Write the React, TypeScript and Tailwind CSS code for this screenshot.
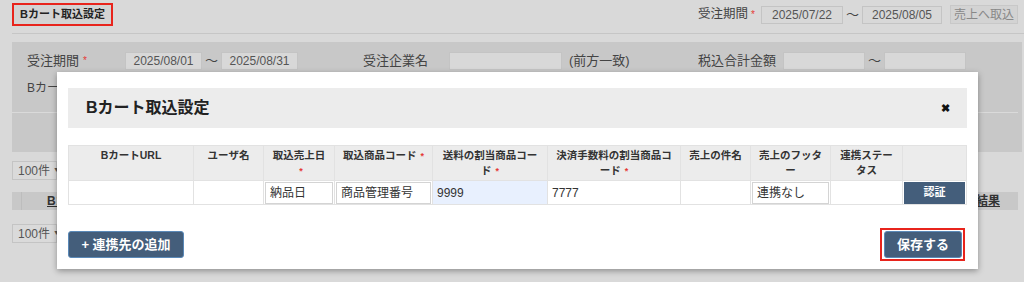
const font = { fontFamily: '"Liberation Sans", "Noto Sans CJK JP", sans-serif' };

function Req() {
  return <span className="ml-1 text-[10px] text-[#e53935]">*</span>;
}

function BgInput({ w, value }: { w: string; value?: string }) {
  return (
    <div className={`${w} flex h-[18px] items-center justify-center border border-[#c4c4c4] bg-[#d8d8d8] text-[12px] text-[#555]`}>
      {value}
    </div>
  );
}

function PerPage({ className = '' }: { className?: string }) {
  return (
    <div
      className={`flex h-[19px] w-[45px] items-center whitespace-nowrap border border-[#c4c4c4] bg-[#dadada] pl-[5px] text-[12px] text-[#555] ${className}`}
    >
      100件<span className="ml-[3px] text-[7px]">▼</span>
    </div>
  );
}

function Background() {
  return (
    <div className="h-[282px] w-[1024px] overflow-hidden bg-[#d9d9d9] pl-[12px] text-[#333]">
      {/* top bar */}
      <div className="flex h-[34px] items-start justify-between border-b border-[#c6c6c6] pr-[6px] pt-[3px]">
        <div className="border-2 border-[#e8241c]">
          <div className="flex h-[19px] w-[97px] items-center justify-center bg-[#d3d3d3] text-[11px] font-bold text-[#222]">
            Bカート取込設定
          </div>
        </div>
        <div className="flex items-center pt-[2px]">
          <span className="text-[12.5px] text-[#444]">受注期間</span>
          <span className="ml-[3px] text-[10px] text-[#e53935]">*</span>
          <div className="ml-[6px]">
            <BgInput w="w-[82px]" value="2025/07/22" />
          </div>
          <span className="mx-[3px] text-[13px] text-[#444]">〜</span>
          <BgInput w="w-[80px]" value="2025/08/05" />
          <div className="ml-[8px] flex h-[19px] w-[68px] items-center justify-center border border-[#c8c8c8] bg-[#d3d3d3] text-[12px] text-[#888]">
            売上へ取込
          </div>
        </div>
      </div>

      {/* search panel */}
      <div className="mt-[8px] mr-[2px] h-[110px] bg-[#c8c8c8]">
        <div className="flex items-center pt-[9px] pl-[15px] text-[13px] text-[#444]">
          <div className="flex w-[98px] items-center">
            受注期間
            <Req />
          </div>
          <BgInput w="w-[77px]" value="2025/08/01" />
          <span className="mx-[3px] text-[13px]">〜</span>
          <BgInput w="w-[77px]" value="2025/08/31" />
          <span className="ml-[65px] w-[86px]">受注企業名</span>
          <BgInput w="w-[113px]" />
          <span className="ml-[7px] w-[129px]">(前方一致)</span>
          <span className="w-[85px]">税込合計金額</span>
          <BgInput w="w-[82px]" />
          <span className="mx-[3px] text-[13px]">〜</span>
          <BgInput w="w-[82px]" />
        </div>
        <div className="mt-[8px] pl-[15px] text-[12px] text-[#444]">Bカート連携</div>
        <div className="mt-[15px] mr-[4px] border-b border-[#dadada]" />
      </div>

      {/* list area */}
      <PerPage className="mt-[9px]" />
      <div className="mt-[12px] mr-[6px] flex h-[18px] items-center bg-[#c8c8c8] text-[12px] font-bold">
        <div className="h-full w-[10px] border-r border-[#bdbdbd]" />
        <span className="ml-[25px] underline">Bカート</span>
        <span className="ml-auto mr-[18px] underline">結果</span>
      </div>
      <PerPage className="mt-[14px]" />
    </div>
  );
}

// header text, one string per line as wrapped in the cell
const columns: { lines: string[]; req?: boolean; w: string }[] = [
  { lines: ['BカートURL'], w: 'w-[125px]' },
  { lines: ['ユーザ名'], w: 'w-[70px]' },
  { lines: ['取込売上日', ''], req: true, w: 'w-[71px]' },
  { lines: ['取込商品コード'], req: true, w: 'w-[98px]' },
  { lines: ['送料の割当商品コー', 'ド'], req: true, w: 'w-[115px]' },
  { lines: ['決済手数料の割当商品コ', 'ード'], req: true, w: 'w-[133px]' },
  { lines: ['売上の件名'], w: 'w-[70px]' },
  { lines: ['売上のフッタ', 'ー'], w: 'w-[80px]' },
  { lines: ['連携ステー', 'タス'], w: 'w-[72px]' },
  { lines: [''], w: 'w-[64px]' },
];

function CellInput({ value, className = '' }: { value: string; className?: string }) {
  return (
    <div className={`flex h-[22px] items-center px-[4px] text-[12px] text-[#333] ${className}`}>{value}</div>
  );
}

function Modal() {
  return (
    <div className="absolute left-[57px] top-[72px] h-[197px] w-[921px] bg-white px-[11px] pt-[16px] shadow-[0_2px_6px_rgba(0,0,0,0.35)]">
      <div className="flex h-[40px] items-center justify-between bg-[#ececec] pl-[18px] pr-[17px]">
        <span className="text-[16px] font-bold text-[#222]">Bカート取込設定</span>
        <span className="text-[11px] font-bold text-[#111]">✖</span>
      </div>

      <table className="mt-[17px] w-[898px] table-fixed border-collapse">
        <colgroup>
          {columns.map((c, i) => (
            <col key={i} className={c.w} />
          ))}
        </colgroup>
        <thead>
          <tr className="h-[34px] bg-[#ececec]">
            {columns.map((c, i) => (
              <th
                key={i}
                className="whitespace-nowrap border border-[#e2e2e2] px-[2px] pt-[2px] pb-[1px] align-top text-[10.5px] font-bold leading-[15px] text-[#333]"
              >
                {c.lines.map((l, j) => (
                  <div key={j}>
                    {l}
                    {c.req && j === c.lines.length - 1 && (
                      <span className="ml-[4px] text-[9px] text-[#e53935]">*</span>
                    )}
                  </div>
                ))}
              </th>
            ))}
          </tr>
        </thead>
        <tbody>
          <tr className="h-[24px]">
            <td className="border border-[#e2e2e2]" />
            <td className="border border-[#e2e2e2]" />
            <td className="border border-[#e2e2e2] px-[1px]">
              <CellInput value="納品日" className="border border-[#d4d4d4]" />
            </td>
            <td className="border border-[#e2e2e2] px-[1px]">
              <CellInput value="商品管理番号" className="border border-[#d4d4d4]" />
            </td>
            <td className="border border-[#e2e2e2] bg-[#e8f0fe]">
              <CellInput value="9999" />
            </td>
            <td className="border border-[#e2e2e2]">
              <CellInput value="7777" />
            </td>
            <td className="border border-[#e2e2e2]" />
            <td className="border border-[#e2e2e2] px-[1px]">
              <CellInput value="連携なし" className="border border-[#d4d4d4]" />
            </td>
            <td className="border border-[#e2e2e2]" />
            <td className="border border-[#e2e2e2] px-[1px]">
              <div className="flex h-[22px] items-center justify-center bg-[#445e7b] text-[11px] font-bold text-white">
                認証
              </div>
            </td>
          </tr>
        </tbody>
      </table>

      <div className="mt-[26px] flex w-[898px] items-center justify-between">
        <button className="flex h-[27px] w-[116px] items-center justify-center rounded-[3px] border border-[#5a89b8] bg-[#445e7b] text-[13px] font-bold text-white">
          + 連携先の追加
        </button>
        <div className="mr-[1px] -my-[3px] border-2 border-[#e8241c] py-[1px] pl-[2px] pr-[1px]">
          <button className="flex h-[27px] w-[78px] items-center justify-center rounded-[3px] border border-[#5a89b8] bg-[#445e7b] text-[13px] font-bold text-white">
            保存する
          </button>
        </div>
      </div>
    </div>
  );
}

export default function App() {
  return (
    <div className="relative h-[282px] w-[1024px] overflow-hidden" style={font}>
      <Background />
      <Modal />
    </div>
  );
}
